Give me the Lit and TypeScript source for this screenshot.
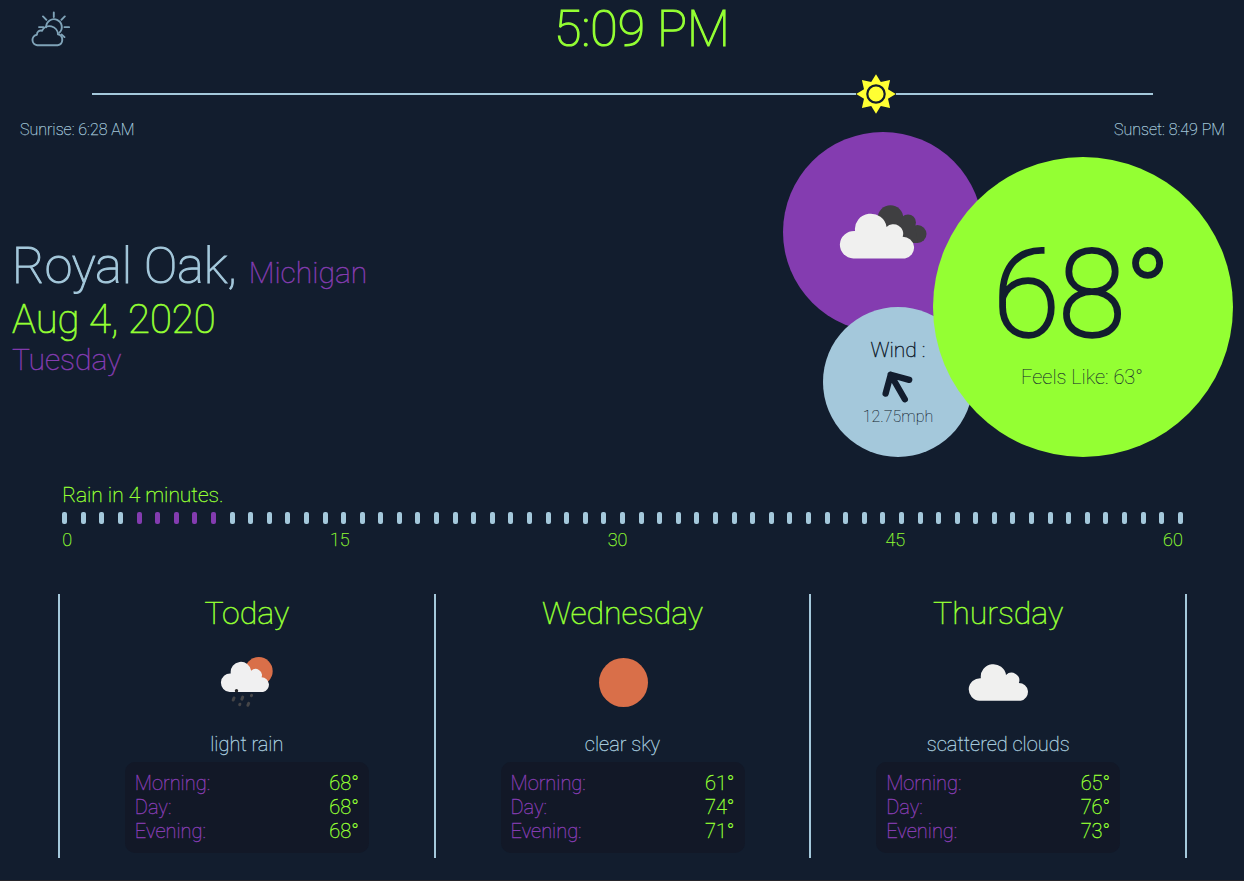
import { LitElement, html, css, svg } from "lit";
import { customElement } from "lit/decorators.js";

interface Forecast {
  name: string;
  icon: "rain" | "clear" | "cloud";
  text: string;
  temps: [string, string][];
}

const DAYS: Forecast[] = [
  { name: "Today", icon: "rain", text: "light rain", temps: [["Morning:", "68°"], ["Day:", "68°"], ["Evening:", "68°"]] },
  { name: "Wednesday", icon: "clear", text: "clear sky", temps: [["Morning:", "61°"], ["Day:", "74°"], ["Evening:", "71°"]] },
  { name: "Thursday", icon: "cloud", text: "scattered clouds", temps: [["Morning:", "65°"], ["Day:", "76°"], ["Evening:", "73°"]] },
];

const RAIN_MINUTES = new Set([4, 5, 6, 7, 8]);

// Cloud silhouette with a flat base.
const CLOUD =
  "M11 37.5A11 11 0 0 1 12.3 15.3A12.3 12.3 0 0 1 36.7 12A7.6 7.6 0 0 1 49.2 19.9A8.9 8.9 0 0 1 51 37.5Z";

const partlyCloudy = html`<svg class="logo" viewBox="0 0 40 40" width="40" height="40">
  <g fill="none" stroke="#7fa3b8" stroke-width="1.9" stroke-linecap="round" stroke-linejoin="round">
    <path d="M23.800 2.500v4.500M13 6.400l3.400 3.400M34.800 6.400l-3.400 3.400M9 17.100h4.500M34.400 17.100h4.700M31.500 24.500l3 2.600" />
    <path d="M16.200 17.200a7.800 7.800 0 1 1 13 5.600" />
    <path d="M7.200 35.200a5.300 5.300 0 0 1-.3-10.500c.1-3 2.400-4.600 5.100-4a8.500 8.500 0 0 1 16 3.700a5.500 5.500 0 0 1-.4 10.800Z" />
  </g>
</svg>`;

const sunMarker = html`<svg class="sun" viewBox="-20 -20 40 40" width="40" height="40">
  <path fill="#ffff33" d="M0-19.800L4.800-12L14.100-14.100L12-4.800L19.800 0L12 4.800L14.100 14.100L4.800 12L0 19.800L-4.800 12L-14.100 14.100L-12 4.800L-19.800 0L-12-4.800L-14.100-14.100L-4.800-12Z" />
  <circle r="8.700" fill="#ffff33" stroke="#121d2e" stroke-width="2.200" />
</svg>`;

const overcast = html`<svg class="now-icon" viewBox="0 0 90 56" width="90" height="56">
  <g fill="#3f3f41">
    <circle cx="52.500" cy="14" r="12.800" /><circle cx="70" cy="18.500" r="8" /><circle cx="79.500" cy="30" r="9" />
    <path d="M45 16L76 16L80 39L60 39Z" />
  </g>
  <path fill="#f0f0ef" transform="translate(1.200 8) scale(1.290 1.240)" d=${CLOUD} />
</svg>`;

const icons = {
  rain: svg`<circle cx="43.700" cy="18.100" r="14" fill="#d96f49"/>
    <path fill="#f0f0f1" transform="translate(5.500 7.700) scale(.835)" d=${CLOUD} />
    <path d="M19 45l-.8 2M27.700 44.100l-.8 2M36.600 42.300l-.2.4M24.900 51.200l-.2.4M33.700 50.300l-.8 2" stroke="#454547" stroke-width="3" stroke-linecap="round"/>
    <circle cx="21.500" cy="37.700" r="1.700" fill="#262628"/>`,
  clear: svg`<circle cx="32.500" cy="29.500" r="24.500" fill="#d96f49"/>`,
  cloud: svg`<path fill="#f0f0ef" transform="translate(1.200 9.800) scale(1.030 1.010)" d=${CLOUD} />`,
};

@customElement("app-root")
export class AppRoot extends LitElement {
  static styles = css`
    :host {
      display: flex;
      flex-direction: column;
      height: 881px;
      box-sizing: border-box;
      overflow: hidden;
      background: #121d2e;
      border-bottom: 1px solid #25252b;
      color: #a4c8db;
      font-family: Roboto, sans-serif;
      font-weight: 100;
      -webkit-text-stroke-width: 0.35px;
    }
    svg { display: block; }
    .top { display: flex; height: 74px; padding-left: 30px; }
    .logo { margin-top: 10px; }
    .time { flex: 1; text-align: center; margin-right: 30px; font-size: 50px; line-height: 59px; color: #94ff33; -webkit-text-stroke-width: 1.2px; }
    .track { display: flex; align-items: center; height: 40px; margin: 0 91px 0 92px; }
    .bar { height: 2px; background: #a4c8db; }
    .before { width: 764px; }
    .after { flex: 1; }
    .times { display: flex; justify-content: space-between; padding: 6px 19px 0 20px; font-size: 16px; line-height: 19px; -webkit-text-stroke-width: 0.25px; }
    .main { display: flex; justify-content: space-between; height: 341px; margin-top: -7px; padding-right: 11px; }
    .place { padding: 105px 0 0 12px; }
    .city { font-size: 50px; line-height: 59px; height: 59px; -webkit-text-stroke-width: 1.1px; }
    .state { font-size: 30px; color: #843cb0; -webkit-text-stroke-width: 0.45px; }
    .date { font-size: 40px; line-height: 47px; height: 46px; color: #94ff33; -webkit-text-stroke-width: 0.7px; }
    .weekday { font-size: 30px; line-height: 35px; color: #843cb0; -webkit-text-stroke-width: 0.45px; }
    .bubbles { position: relative; width: 450px; height: 325px; color: #121d2e; }
    .bubble { position: absolute; display: flex; flex-direction: column; align-items: center; border-radius: 50%; box-sizing: border-box; }
    .sky { left: 0; top: 0; width: 200px; height: 200px; background: #843cb0; padding-top: 72px; }
    .wind { left: 40px; top: 175px; width: 150px; height: 150px; background: #a4c8db; padding-top: 31px; }
    .temp { left: 150px; top: 25px; width: 300px; height: 300px; background: #94ff33; padding: 67px 2px 0 0; }
    .wind-title { font-size: 21px; line-height: 24px; -webkit-text-stroke-width: 0.4px; }
    .arrow { margin: 8px 0 5px; overflow: visible; }
    .speed { font-size: 16px; line-height: 19px; -webkit-text-stroke-width: 0.1px; }
    .degrees { font-size: 120px; line-height: 143px; height: 141px; -webkit-text-stroke: 3.6px #121d2e; }
    .feels { font-size: 20px; line-height: 24px; -webkit-text-stroke-width: 0.1px; }
    .rain { padding: 0 61.2px 0 62.2px; color: #94ff33; }
    .rain-title { font-size: 21px; line-height: 24px; padding-top: 10px; height: 29px; }
    .pips { display: flex; justify-content: space-between; }
    .pip { width: 5px; height: 12px; border-radius: 2px; background: #a4c8db; }
    .wet { background: #843cb0; }
    .scale { display: flex; justify-content: space-between; font-size: 18px; line-height: 21px; padding-top: 5px; -webkit-text-stroke-width: 0.25px; }
    .days { display: flex; margin: 44px 57px 0 58px; height: 264px; border-left: 2px solid #a4c8db; }
    .day { flex: 1; box-sizing: border-box; border-right: 2px solid #a4c8db; display: flex; flex-direction: column; align-items: center; }
    .day-name { font-size: 32px; line-height: 38px; color: #94ff33; -webkit-text-stroke-width: 0.5px; }
    .day-icon { margin-top: 21px; }
    .desc { font-size: 20px; line-height: 24px; margin-top: 19px; }
    .temps { width: 244px; height: 91px; box-sizing: border-box; margin-top: 6px; padding: 9px 10px; border-radius: 10px; background: #121827; font-size: 20px; line-height: 24px; }
    .row { display: flex; justify-content: space-between; color: #843cb0; }
    .value { color: #94ff33; }
  `;

  render() {
    return html`
      <div class="top">${partlyCloudy}<div class="time">5:09 PM</div></div>
      <div class="track"><div class="bar before"></div>${sunMarker}<div class="bar after"></div></div>
      <div class="times"><span>Sunrise: 6:28 AM</span><span>Sunset: 8:49 PM</span></div>
      <div class="main">
        <div class="place">
          <div class="city">Royal Oak, <span class="state">Michigan</span></div>
          <div class="date">Aug 4, 2020</div>
          <div class="weekday">Tuesday</div>
        </div>
        <div class="bubbles">
          <div class="bubble sky">${overcast}</div>
          <div class="bubble wind">
            <div class="wind-title">Wind :</div>
            <svg class="arrow" width="32" height="32" viewBox="0 0 32 32">
              <path d="M3.600 23.600L8.700 4.800L27.200 9.900M8.700 4.800L22.800 29.300" fill="none" stroke="#121d2e" stroke-width="6.300" stroke-linecap="round" stroke-linejoin="round" />
            </svg>
            <div class="speed">12.75mph</div>
          </div>
          <div class="bubble temp">
            <div class="degrees">68°</div>
            <div class="feels">Feels Like: 63°</div>
          </div>
        </div>
      </div>
      <div class="rain">
        <div class="rain-title">Rain in 4 minutes.</div>
        <div class="pips">${Array.from({ length: 61 }, (_, i) => html`<div class="pip ${RAIN_MINUTES.has(i) ? "wet" : ""}"></div>`)}</div>
        <div class="scale">${[0, 15, 30, 45, 60].map((n) => html`<span>${n}</span>`)}</div>
      </div>
      <div class="days">
        ${DAYS.map(
          (d) => html`<div class="day">
            <div class="day-name">${d.name}</div>
            <svg class="day-icon" width="63" height="60" viewBox="0 0 63 60">${icons[d.icon]}</svg>
            <div class="desc">${d.text}</div>
            <div class="temps">${d.temps.map(([k, v]) => html`<div class="row"><span>${k}</span><span class="value">${v}</span></div>`)}</div>
          </div>`
        )}
      </div>
    `;
  }
}
